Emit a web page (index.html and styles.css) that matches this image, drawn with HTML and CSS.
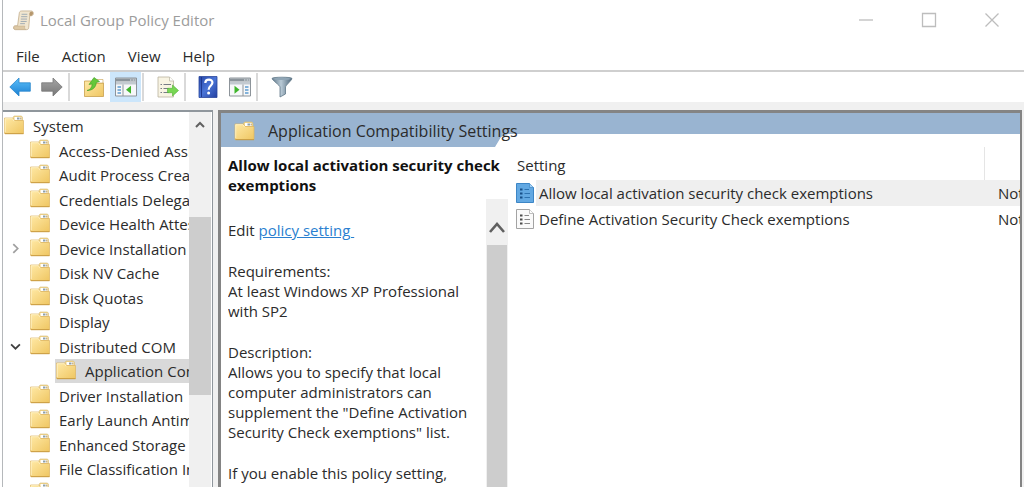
FILE: index.html
```html
<!DOCTYPE html>
<html lang="en">
<head>
<meta charset="utf-8">
<title>Local Group Policy Editor</title>
<link rel="stylesheet" href="styles.css">
</head>
<body>
<svg class="defs" aria-hidden="true">
  <defs>
    <linearGradient id="gFolder" x1="0" y1="0" x2="1" y2="1"><stop offset="0" stop-color="#ffe9a6"/><stop offset="1" stop-color="#efc662"/></linearGradient>
    <linearGradient id="gBlue" x1="0" y1="0" x2="0" y2="1"><stop offset="0" stop-color="#5cc0fa"/><stop offset="1" stop-color="#1b7fd2"/></linearGradient>
    <linearGradient id="gGray" x1="0" y1="0" x2="0" y2="1"><stop offset="0" stop-color="#a5a5a5"/><stop offset="1" stop-color="#777"/></linearGradient>
    <linearGradient id="gHelp" x1="0" y1="0" x2="1" y2="1"><stop offset="0" stop-color="#2747a8"/><stop offset=".5" stop-color="#4a74d6"/><stop offset="1" stop-color="#2340a0"/></linearGradient>
    <linearGradient id="gFunnel" x1="0" y1="0" x2="1" y2="0"><stop offset="0" stop-color="#5f7789"/><stop offset=".45" stop-color="#b9cad6"/><stop offset="1" stop-color="#4d6578"/></linearGradient>
    <symbol id="folder" viewBox="0 0 20 20">
      <path d="M9 4V2.500l1-1.500h7.500l1 1.500V6H9z" fill="#f0d48a" stroke="#d9bd77" stroke-width=".6"/>
      <path d="M10.500 2h7v3h-7z" fill="#fff"/><path d="M13 2.500h2.500v2H13z" fill="#8fa0ab"/><path d="M16 2.500h1.500v2H16z" fill="#c9b58a"/>
      <path d="M.5 3h8.200l1.800 2.500h9V18.500H.5z" fill="url(#gFolder)" stroke="#dcb561" stroke-width=".7"/>
      <path d="M1 18.700h18.500" stroke="#c99b3d" stroke-width="1"/>
      <path d="M1.200 17V3.700h7.200l1.800 2.500" fill="none" stroke="#fff4cc" stroke-width=".8"/>
    </symbol>
    <symbol id="pane" viewBox="0 0 22 20">
      <path d="M.5 1h21v18H.5z" fill="#f7f8f9" stroke="#8d949a"/>
      <path d="M1 1.500h20v3H1z" fill="#8b949b"/><path d="M15 3h1.500M17.500 3H19M19.500 3H21" stroke="#e8eef2" stroke-width="1"/>
      <path d="M1 5h20v2.500H1z" fill="#c3cad0"/>
    </symbol>
  </defs>
</svg>
<div class="app">
  <header class="titlebar">
    <svg class="scroll-logo" viewBox="0 0 22 22" aria-hidden="true">
      <path d="M6.500 4C6.500 2 7.500 1 9 1h10c1.500 0 2.300 1 2.300 2.500S20.500 6 19 6l-1.500 0-1 12c0 1.800-1 2.600-2.500 2.600H2.500C1 20.600.5 19.500.5 18.500c0-1 .5-2 2-2h2.300z" fill="#efe2c8" stroke="#b79d74" stroke-width=".8"/>
      <path d="M17.500 6c-.8-1.500-.5-4 1.500-4.500 1.500 0 2 1 2 2S20 6 19 6z" fill="#a98554"/>
      <path d="M.8 18.500c0-1 .7-1.700 1.700-1.700h10c-.8 1.200-.5 3 .8 3.600H2.500c-1 0-1.700-1-1.700-1.900z" fill="#d9c096" stroke="#b79d74" stroke-width=".5"/>
      <path d="M9 4.500h6M8.500 7h6.500M8.200 9.500h6.500M8 12h6.300M7.500 14.300h5" stroke="#8e9ba6" stroke-width="1"/>
    </svg>
    <h1 class="title">Local Group Policy Editor</h1>
    <div class="window-buttons">
      <button class="win-btn" aria-label="Minimize"><svg viewBox="0 0 16 16"><path d="M1 8h14"/></svg></button>
      <button class="win-btn" aria-label="Maximize"><svg viewBox="0 0 16 16"><path d="M1.500 1.500h13v13h-13z"/></svg></button>
      <button class="win-btn" aria-label="Close"><svg viewBox="0 0 16 16"><path d="M1.500 1.500l13 13M14.500 1.500l-13 13"/></svg></button>
    </div>
  </header>
  <nav class="menubar">
    <button class="menu">File</button><button class="menu">Action</button><button class="menu">View</button><button class="menu">Help</button>
  </nav>
  <div class="toolbar" role="toolbar">
    <button class="tool" aria-label="Back"><svg viewBox="0 0 22 22"><path d="M.8 11L10 2v4.800h11.300v8.400H10V20z" fill="url(#gBlue)" stroke="#2a86cc" stroke-width=".8"/></svg></button>
    <button class="tool" aria-label="Forward"><svg viewBox="0 0 22 22"><path d="M21.200 11L12 2v4.800H.7v8.400H12V20z" fill="url(#gGray)" stroke="#777" stroke-width=".8"/></svg></button>
    <span class="sep"></span>
    <button class="tool" aria-label="Up one level"><svg viewBox="0 0 22 22"><path d="M1.500 5h7l2 2h10v13.500h-19z" fill="url(#gFolder)" stroke="#c8a04c" stroke-width=".8"/><path d="M14 3.500h6V7h-8z" fill="#fff" stroke="#c8a04c" stroke-width=".6"/><path d="M4 14.500c3-.5 5-3 5.200-6.500L6 8.500 11 1.500l5.500 4-3.200 1C13 11 10 14.500 4 14.500z" fill="#64c83a" stroke="#3b9c22" stroke-width=".6"/></svg></button>
    <button class="tool tool-active" aria-label="Show or hide console tree" aria-pressed="true"><svg viewBox="0 0 22 20"><use href="#pane"/><path d="M8 7.500V19" stroke="#8d949a"/><path d="M2.500 10h3.500M2.500 13h3.500M2.500 16h3.500" stroke="#5e9bd0" stroke-width="1.300"/><path d="M11 12.800l5-4v8z" fill="#3fb52b"/></svg></button>
    <span class="sep"></span>
    <button class="tool" aria-label="Export list"><svg viewBox="0 0 22 22"><path d="M1 1h11.500l4 4v16H1z" fill="#f8f4e3" stroke="#b9b3a0" stroke-width=".8"/><path d="M12.500 1v4h4" fill="#fff" stroke="#b9b3a0" stroke-width=".7"/><path d="M3.500 8.500H5M3.500 12.500H5M3.500 16.500H5M6.500 8.500H14M6.500 12.500H12M6.500 16.500H12" stroke="#777c86" stroke-width="1.200"/><path d="M10.500 12.300h5V9l6 5.500-6 5.500v-3.300h-5z" fill="#78d653" stroke="#4fb232" stroke-width=".6"/></svg></button>
    <span class="sep sep-tight"></span>
    <button class="tool" aria-label="Help"><svg viewBox="0 0 22 22"><path d="M2 .5h18v21H2z" fill="url(#gHelp)" stroke="#2a469c" stroke-width=".8"/><path d="M4.500 1v20" stroke="#1e388f" stroke-width="1"/><path d="M8.300 7c.1-4.400 7.300-4.300 7.100-.2-.1 3-3.800 3.100-3.800 7" fill="none" stroke="#fff" stroke-width="2.200"/><circle cx="11.600" cy="17" r="1.500" fill="#fff"/></svg></button>
    <button class="tool" aria-label="Show or hide action pane"><svg viewBox="0 0 22 20"><use href="#pane"/><path d="M14 7.500V19" stroke="#8d949a"/><path d="M16 10h3.500M16 13h3.500M16 16h3.500" stroke="#5e9bd0" stroke-width="1.300"/><path d="M10.500 12.800l-5-4v8z" fill="#3fb52b"/></svg></button>
    <span class="sep"></span>
    <button class="tool" aria-label="Filter"><svg viewBox="0 0 22 22"><path d="M1 2.500C1 .8 21 .8 21 2.500c0 1.500-6.500 7-6.500 8.500v7L9 21v-10C9 9.500 1 4 1 2.500z" fill="url(#gFunnel)" stroke="#607788" stroke-width=".8"/><ellipse cx="11" cy="2.800" rx="9" ry="1.300" fill="#8fa5b5"/></svg></button>
  </div>

  <main class="body">
    <section class="tree-panel" aria-label="Console tree">
      <div class="tree">
        <div class="row"><button class="node"><svg><use href="#folder"/></svg>System</button></div>
        <div class="row"><span class="indent"></span><button class="node"><svg><use href="#folder"/></svg>Access-Denied Assistance</button></div>
        <div class="row"><span class="indent"></span><button class="node"><svg><use href="#folder"/></svg>Audit Process Creation</button></div>
        <div class="row"><span class="indent"></span><button class="node"><svg><use href="#folder"/></svg>Credentials Delegation</button></div>
        <div class="row"><span class="indent"></span><button class="node"><svg><use href="#folder"/></svg>Device Health Attestation</button></div>
        <div class="row"><button class="indent toggle" aria-label="Expand" aria-expanded="false"><svg viewBox="0 0 10 10"><path d="M3 1l4 4-4 4"/></svg></button><button class="node"><svg><use href="#folder"/></svg>Device Installation</button></div>
        <div class="row"><span class="indent"></span><button class="node"><svg><use href="#folder"/></svg>Disk NV Cache</button></div>
        <div class="row"><span class="indent"></span><button class="node"><svg><use href="#folder"/></svg>Disk Quotas</button></div>
        <div class="row"><span class="indent"></span><button class="node"><svg><use href="#folder"/></svg>Display</button></div>
        <div class="row"><button class="indent toggle open" aria-label="Collapse" aria-expanded="true"><svg viewBox="0 0 10 10"><path d="M1 3l4 4 4-4"/></svg></button><button class="node"><svg><use href="#folder"/></svg>Distributed COM</button></div>
        <div class="row"><span class="indent"></span><span class="indent"></span><button class="node selected"><svg><use href="#folder"/></svg>Application Compatibility Settings</button></div>
        <div class="row"><span class="indent"></span><button class="node"><svg><use href="#folder"/></svg>Driver Installation</button></div>
        <div class="row"><span class="indent"></span><button class="node"><svg><use href="#folder"/></svg>Early Launch Antimalware</button></div>
        <div class="row"><span class="indent"></span><button class="node"><svg><use href="#folder"/></svg>Enhanced Storage Access</button></div>
        <div class="row"><span class="indent"></span><button class="node"><svg><use href="#folder"/></svg>File Classification Infrastructure</button></div>
        <div class="row"><span class="indent"></span><button class="node"><svg><use href="#folder"/></svg>File Share Shadow Copy Provider</button></div>
      </div>
      <div class="scrollbar tree-scroll">
        <button class="scroll-up" aria-label="Scroll up"><svg viewBox="0 0 16 16"><path d="M4 10l4-4 4 4"/></svg></button>
        <div class="thumb"></div>
      </div>
    </section>

    <section class="result-panel">
      <header class="result-head"><svg><use href="#folder"/></svg><h2>Application Compatibility Settings</h2></header>
      <div class="result-body">
        <article class="details">
          <h3>Allow local activation security check exemptions</h3>
          <div class="details-scroll">
            <div class="details-text">
              <p>Edit <a href="#policy">policy setting&nbsp;</a></p>
              <p>Requirements:<br>At least Windows XP Professional with SP2</p>
              <p>Description:<br>Allows you to specify that local computer administrators can supplement the "Define Activation Security Check exemptions" list.</p>
              <p>If you enable this policy setting,</p>
            </div>
            <div class="scrollbar details-bar">
              <button class="scroll-up" aria-label="Scroll up"><svg viewBox="0 0 16 16"><path d="M1 12l7-8 7 8"/></svg></button>
              <div class="thumb"></div>
            </div>
          </div>
        </article>
        <div class="list">
          <table>
            <colgroup><col class="col-icon"><col><col class="col-state"></colgroup>
            <thead><tr><th colspan="2" scope="col">Setting</th><td class="state-head"></td></tr></thead>
            <tbody>
              <tr class="current">
                <td class="icon-cell"><svg viewBox="0 0 18 20"><path d="M.5.5h13l4 4v15H.5z" fill="#62a8e2" stroke="#3d86c6"/><path d="M13.500.5v4h4" fill="#a5d0f3" stroke="#3d86c6" stroke-width=".7"/><path d="M4 6.500h2.500M4 10.500h2.500M4 14.500h2.500" stroke="#174f88" stroke-width="2"/><path d="M8.500 6.500H13M8.500 10.500H14M8.500 14.500H14" stroke="#2d72b0"/></svg></td>
                <td>Allow local activation security check exemptions</td><td class="state">Not configured</td>
              </tr>
              <tr>
                <td class="icon-cell"><svg viewBox="0 0 18 20"><path d="M.5.5h13l4 4v15H.5z" fill="#fafafa" stroke="#a3a3a3"/><path d="M13.500.5v4h4" fill="#fff" stroke="#a3a3a3" stroke-width=".7"/><path d="M4 6.500h2.500M4 10.500h2.500M4 14.500h2.500" stroke="#4b4b4b" stroke-width="2"/><path d="M8.500 6.500H13M8.500 10.500H14M8.500 14.500H14" stroke="#888"/></svg></td>
                <td>Define Activation Security Check exemptions</td><td class="state">Not configured</td>
              </tr>
            </tbody>
          </table>
        </div>
      </div>
    </section>
  </main>
</div>
</body>
</html>
```
FILE: styles.css
```css
* { box-sizing: border-box; }

body {
  margin: 0;
  font-family: "Open Sans", "Noto Sans", sans-serif;
  font-size: 15px;
  line-height: 20px;
  color: #2b2b2b;
  background: #fff;
}

button {
  font: inherit;
  color: inherit;
  background: none;
  border: 0;
  padding: 0;
}

h1, h2, h3, p { margin: 0; font-size: inherit; font-weight: 400; }

.defs { position: absolute; width: 0; height: 0; }

.app {
  display: flex;
  flex-direction: column;
  height: 100vh;
  overflow: hidden;
  margin-left: 2px;
  border-left: 1px solid #b5b8bb;
}

/* Title bar */
.titlebar { display: flex; align-items: center; height: 40px; padding: 0 1px 0 10px; }
.scroll-logo { width: 21px; height: 21px; margin-right: 6px; opacity: .85; }
.title { color: #9c9c9c; }
.window-buttons { display: flex; margin-left: auto; }
.win-btn { display: grid; place-items: center; width: 63px; height: 38px; }
.win-btn svg { width: 16px; height: 16px; fill: none; stroke: #bdbdbd; stroke-width: 1.3; }

/* Menu bar */
.menubar { display: flex; gap: 22px; height: 30px; padding: 2px 0 0 13px; align-items: center; }

/* Toolbar */
.toolbar {
  display: flex;
  align-items: center;
  gap: 1px;
  height: 32px;
  padding-left: 1px;
  border-top: 2px solid #cfcfcf;
}
.tool { display: grid; place-items: center; width: 31px; height: 30px; }
.tool svg { width: 22px; height: 22px; }
.tool-active { background: #cce6fb; }
.sep { width: 2px; height: 28px; margin-right: 7px; background: #d9d9d9; }
.sep-tight { margin-right: 5px; }

/* Work area */
.body {
  display: flex;
  flex: 1;
  min-height: 0;
  gap: 5px;
  padding: 8px 2px 0 0;
  background: #f0f0f0;
}

.tree-panel {
  display: flex;
  width: 210px;
  border: 1px solid #8f969c;
  border-width: 2px 1px 0 0;
  background: #fff;
}
.tree { flex: 1; min-width: 0; overflow: hidden; padding-top: 2px; }
.row { display: flex; height: 24px; }
.row:nth-child(even) { height: 25px; }
.indent { flex: none; width: 26px; }
.toggle { display: grid; place-items: center start; padding-left: 7px; }
.toggle svg { width: 11px; height: 11px; fill: none; stroke: #a0a0a0; stroke-width: 1.6; }
.toggle.open svg { stroke: #404040; }
.node {
  display: flex;
  flex: 1;
  align-items: center;
  gap: 9px;
  min-width: 0;
  padding-left: 1px;
  overflow: hidden;
  white-space: nowrap;
}
.node svg { flex: none; width: 20px; height: 20px; margin-bottom: 3px; }
.node.selected { background: #d9d9d9; }

.scrollbar { flex: none; width: 22px; background: #f0f0f0; }
.scroll-up { display: grid; place-items: center; width: 100%; }
.scroll-up svg { width: 16px; height: 16px; fill: none; stroke: #606060; }
.thumb { background: #cdcdcd; }
.tree-scroll { margin-right: 1px; }
.tree-scroll .scroll-up { height: 26px; }
.tree-scroll .scroll-up svg { stroke-width: 2; }
.tree-scroll .thumb { height: 178px; margin-top: 79px; }

/* Result pane */
.result-panel {
  display: flex;
  flex: 1;
  flex-direction: column;
  min-width: 0;
  border: 2px solid #848484;
  border-width: 3px 2px 0 3px;
  background: #fff;
}
.result-head {
  position: relative;
  display: flex;
  flex: none;
  align-items: center;
  gap: 13px;
  height: 34px;
  padding: 2px 0 0 13px;
  font-size: 16px;
  z-index: 0;
}
.result-head::before {
  content: "";
  position: absolute;
  inset: 0;
  z-index: -1;
  background: #99b4d1;
  clip-path: polygon(0 0, 100% 0, 100% 21px, 287px 21px, 280px 24px, 274px 34px, 0 34px);
}
.result-head svg { width: 21px; height: 20px; }
.result-body { display: flex; flex: 1; min-height: 0; }

.details { display: flex; flex: none; flex-direction: column; width: 287px; padding: 8px 0 0 7px; }
.details h3 { font-weight: 700; color: #111; }
.details-scroll { display: flex; flex: 1; min-height: 0; margin-top: 4px; }
.details-text {
  display: flex;
  flex: 1;
  flex-direction: column;
  gap: 21px;
  overflow: hidden;
  padding-top: 21px;
}
.details a { color: #2a7fd0; }
.details-bar .scroll-up { height: 46px; padding-top: 12px; }
.details-bar .scroll-up svg { stroke-width: 2.6; }
.details-bar .thumb { height: 100%; margin: 0 1px; }

.list { flex: 1; min-width: 0; padding-left: 7px; }
table { width: 100%; table-layout: fixed; border-collapse: collapse; white-space: nowrap; }
th { height: 33px; padding: 2px 0 0 2px; text-align: left; font-weight: 400; }
td { height: 26px; padding: 0 0 0 3px; overflow: hidden; }
.col-icon { width: 21px; }
.col-state { width: 36px; }
.icon-cell { padding: 0; background: #fff; }
.icon-cell svg { display: block; width: 18px; height: 20px; margin-left: 1px; }
.state-head { border-left: 1px solid #e5e5e5; }
.state { padding-left: 14px; }
.current { background: #efefef; }
```
